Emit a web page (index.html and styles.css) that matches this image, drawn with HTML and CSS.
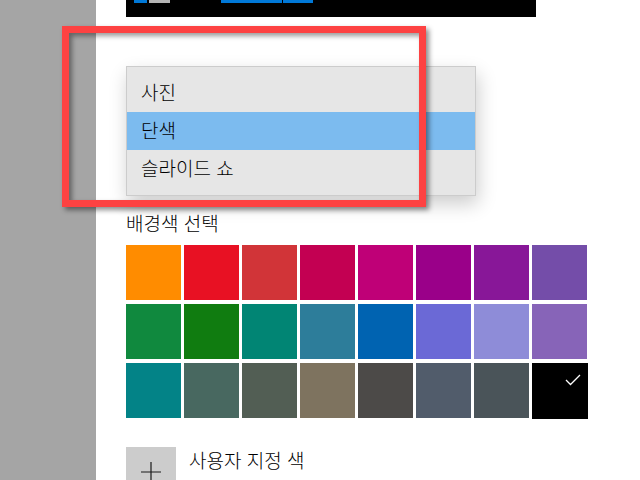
FILE: index.html
```html
<!DOCTYPE html>
<html lang="ko">
<head>
  <meta charset="UTF-8" />
  <title>배경</title>
  <link rel="stylesheet" href="styles.css">
</head>
<body>
  <div class="settings">
    <div class="sidebar"></div>

    <div class="main">
      <div class="preview">
        <span class="bar blue small"></span>
        <span class="bar gray"></span>
        <span class="bar blue wide"></span>
        <span class="bar blue mid"></span>
      </div>

      <div class="dropdown">
        <div class="dropdown-item">사진</div>
        <div class="dropdown-item selected">단색</div>
        <div class="dropdown-item">슬라이드 쇼</div>
      </div>

      <div class="section-label">배경색 선택</div>

      <div class="swatches">
        <div class="swatch" style="background:#ff8c00"></div>
        <div class="swatch" style="background:#e81123"></div>
        <div class="swatch" style="background:#d13438"></div>
        <div class="swatch" style="background:#c30052"></div>
        <div class="swatch" style="background:#bf0077"></div>
        <div class="swatch" style="background:#9a0089"></div>
        <div class="swatch" style="background:#881798"></div>
        <div class="swatch" style="background:#744da9"></div>
        <div class="swatch" style="background:#10893e"></div>
        <div class="swatch" style="background:#107c10"></div>
        <div class="swatch" style="background:#018574"></div>
        <div class="swatch" style="background:#2d7d9a"></div>
        <div class="swatch" style="background:#0063b1"></div>
        <div class="swatch" style="background:#6b69d6"></div>
        <div class="swatch" style="background:#8e8cd8"></div>
        <div class="swatch" style="background:#8764b8"></div>
        <div class="swatch" style="background:#038387"></div>
        <div class="swatch" style="background:#486860"></div>
        <div class="swatch" style="background:#525e54"></div>
        <div class="swatch" style="background:#7e735f"></div>
        <div class="swatch" style="background:#4c4a48"></div>
        <div class="swatch" style="background:#515c6b"></div>
        <div class="swatch" style="background:#4a5459"></div>
        <div class="swatch active" style="background:#000000">
          <svg class="check" width="16" height="12" viewBox="0 0 16 12">
            <path d="M1 6 L5.5 10.5 L15 1" fill="none" stroke="#fff" stroke-width="1.3"/>
          </svg>
        </div>
      </div>

      <div class="custom-color">
        <div class="custom-box">
          <svg width="20" height="20" viewBox="0 0 20 20">
            <path d="M10 0 V20 M0 10 H20" stroke="#1a1a1a" stroke-width="1.2"/>
          </svg>
        </div>
        <div class="custom-label">사용자 지정 색</div>
      </div>
    </div>

    <div class="highlight-frame"></div>
  </div>
</body>
</html>
```

FILE: styles.css
```css
body {
  margin: 0;
  font-family: "Noto Sans CJK KR", "Noto Sans", sans-serif;
  font-weight: 300;
  background-color: #ffffff;
  color: #000000;
}

.settings {
  display: flex;
  width: 640px;
  height: 480px;
  overflow: hidden;
  position: relative;
}

.sidebar {
  width: 96px;
  flex-shrink: 0;
  background-color: #a5a5a5;
}

.main {
  display: flex;
  flex-direction: column;
  padding-left: 30px;
}

.main > * {
  flex-shrink: 0;
}

.preview {
  width: 410px;
  height: 17px;
  background-color: #000;
  display: flex;
  align-items: flex-start;
}

.bar {
  height: 3px;
  display: block;
}

.bar.blue {
  background-color: #0078d7;
}

.bar.gray {
  background-color: #b4b4b4;
  width: 21px;
  margin-left: 2px;
}

.bar.small {
  width: 13px;
  margin-left: 8px;
}

.bar.wide {
  width: 61px;
  margin-left: 51px;
}

.bar.mid {
  width: 30px;
  margin-left: 1px;
}

.dropdown {
  margin-top: 49px;
  width: 350px;
  box-sizing: border-box;
  padding: 7px 0;
  background-color: #e6e6e6;
  border: 1px solid #cccccc;
  box-shadow: 2px 8px 18px rgba(0, 0, 0, 0.2);
}

.dropdown-item {
  height: 38px;
  line-height: 36px;
  padding-left: 14px;
  font-size: 19px;
}

.dropdown-item.selected {
  background-color: #7cbbef;
}

.section-label {
  margin-top: 14px;
  line-height: 25px;
  font-size: 19px;
}

.swatches {
  margin-top: 10px;
  display: grid;
  grid-template-columns: repeat(8, 55px);
  grid-auto-rows: 55px;
  column-gap: 3px;
  row-gap: 4px;
}

.swatch {
  position: relative;
}

.swatch.active {
  margin: 0 -1px -1px 0;
}

.check {
  position: absolute;
  top: 11px;
  right: 7px;
}

.custom-color {
  margin-top: 29px;
  display: flex;
  align-items: flex-start;
}

.custom-box {
  width: 50px;
  height: 50px;
  background-color: #cccccc;
  display: flex;
  justify-content: center;
  align-items: center;
}

.custom-label {
  margin-left: 13px;
  line-height: 26px;
  font-size: 19px;
}

.highlight-frame {
  position: absolute;
  left: 62px;
  top: 26px;
  width: 364px;
  height: 181px;
  box-sizing: border-box;
  border: 7px solid #fd4242;
  box-shadow: 3px 3px 5px rgba(0, 0, 0, 0.45), inset 3px 3px 5px rgba(0, 0, 0, 0.4);
}
```
